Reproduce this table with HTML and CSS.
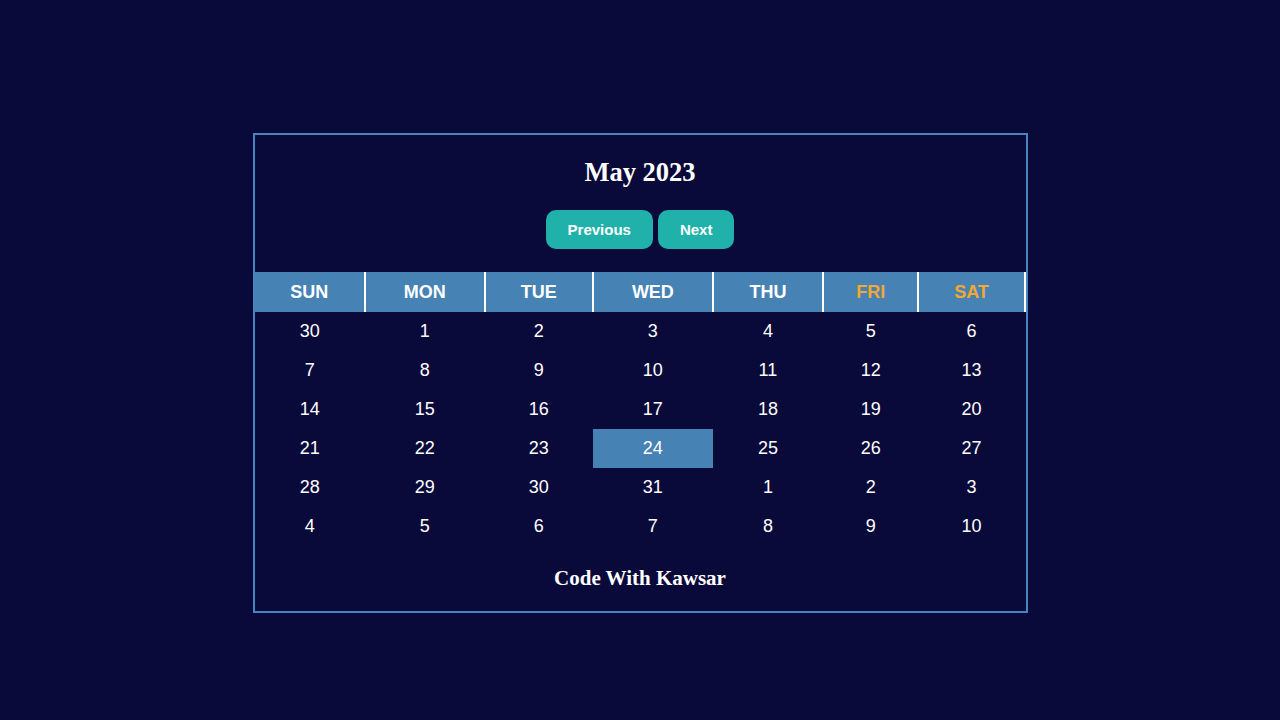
FILE: index.html
```html
<!DOCTYPE html>
<html>
<head>
<meta charset="utf-8">
<link rel="stylesheet" href="styles.css">
</head>
<body>
<div class="calendar">
  <h2 class="title">May 2023</h2>
  <div class="nav">
    <button class="btn">Previous</button>
    <button class="btn">Next</button>
  </div>
  <table class="grid">
    <thead>
      <tr>
        <th>SUN</th><th>MON</th><th>TUE</th><th>WED</th><th>THU</th><th class="weekend">FRI</th><th class="weekend">SAT</th>
      </tr>
    </thead>
    <tbody>
      <tr><td>30</td><td>1</td><td>2</td><td>3</td><td>4</td><td>5</td><td>6</td></tr>
      <tr><td>7</td><td>8</td><td>9</td><td>10</td><td>11</td><td>12</td><td>13</td></tr>
      <tr><td>14</td><td>15</td><td>16</td><td>17</td><td>18</td><td>19</td><td>20</td></tr>
      <tr><td>21</td><td>22</td><td>23</td><td class="today">24</td><td>25</td><td>26</td><td>27</td></tr>
      <tr><td>28</td><td>29</td><td>30</td><td>31</td><td>1</td><td>2</td><td>3</td></tr>
      <tr><td>4</td><td>5</td><td>6</td><td>7</td><td>8</td><td>9</td><td>10</td></tr>
    </tbody>
  </table>
  <p class="footer">Code With Kawsar</p>
</div>
</body>
</html>
```
FILE: styles.css
```css
html, body {
  margin: 0;
  padding: 0;
  background: #0a0a3a;
}
body {
  display: flex;
  flex-direction: column;
  align-items: center;
  padding-top: 133px;
  font-family: "Liberation Sans", Arial, sans-serif;
  color: #ffffff;
}
.calendar {
  width: 771px;
  border: 2px solid #4a84bf;
  background: #0a0a3a;
  display: flex;
  flex-direction: column;
  align-items: center;
}
.title {
  margin: 22px 0 0;
  font-family: "Liberation Serif", "Times New Roman", serif;
  font-size: 26.5px;
  line-height: 30px;
  font-weight: bold;
}
.nav {
  display: flex;
  gap: 5px;
  margin-top: 23px;
}
.btn {
  background: #20b2aa;
  color: #ffffff;
  border: none;
  border-radius: 10px;
  padding: 11px 22px;
  font-family: "Liberation Sans", Arial, sans-serif;
  font-size: 15px;
  line-height: 17px;
  font-weight: bold;
}
.grid {
  width: 100%;
  margin-top: 23px;
  border-collapse: collapse;
  border-spacing: 0;
}
.grid th {
  background: #4682b4;
  color: #ffffff;
  font-size: 18px;
  font-weight: bold;
  line-height: 21px;
  padding: 10px 10px 9px;
  border-right: 2px solid #ffffff;
}
.grid th.weekend {
  color: #f2a833;
}
.grid td {
  text-align: center;
  font-size: 18px;
  line-height: 21px;
  padding: 9px 10px;
}
.grid td.today {
  background: #4682b4;
}
.footer {
  margin: 20px 0 21px;
  font-family: "Liberation Serif", "Times New Roman", serif;
  font-size: 21px;
  line-height: 24px;
  font-weight: bold;
}
```
